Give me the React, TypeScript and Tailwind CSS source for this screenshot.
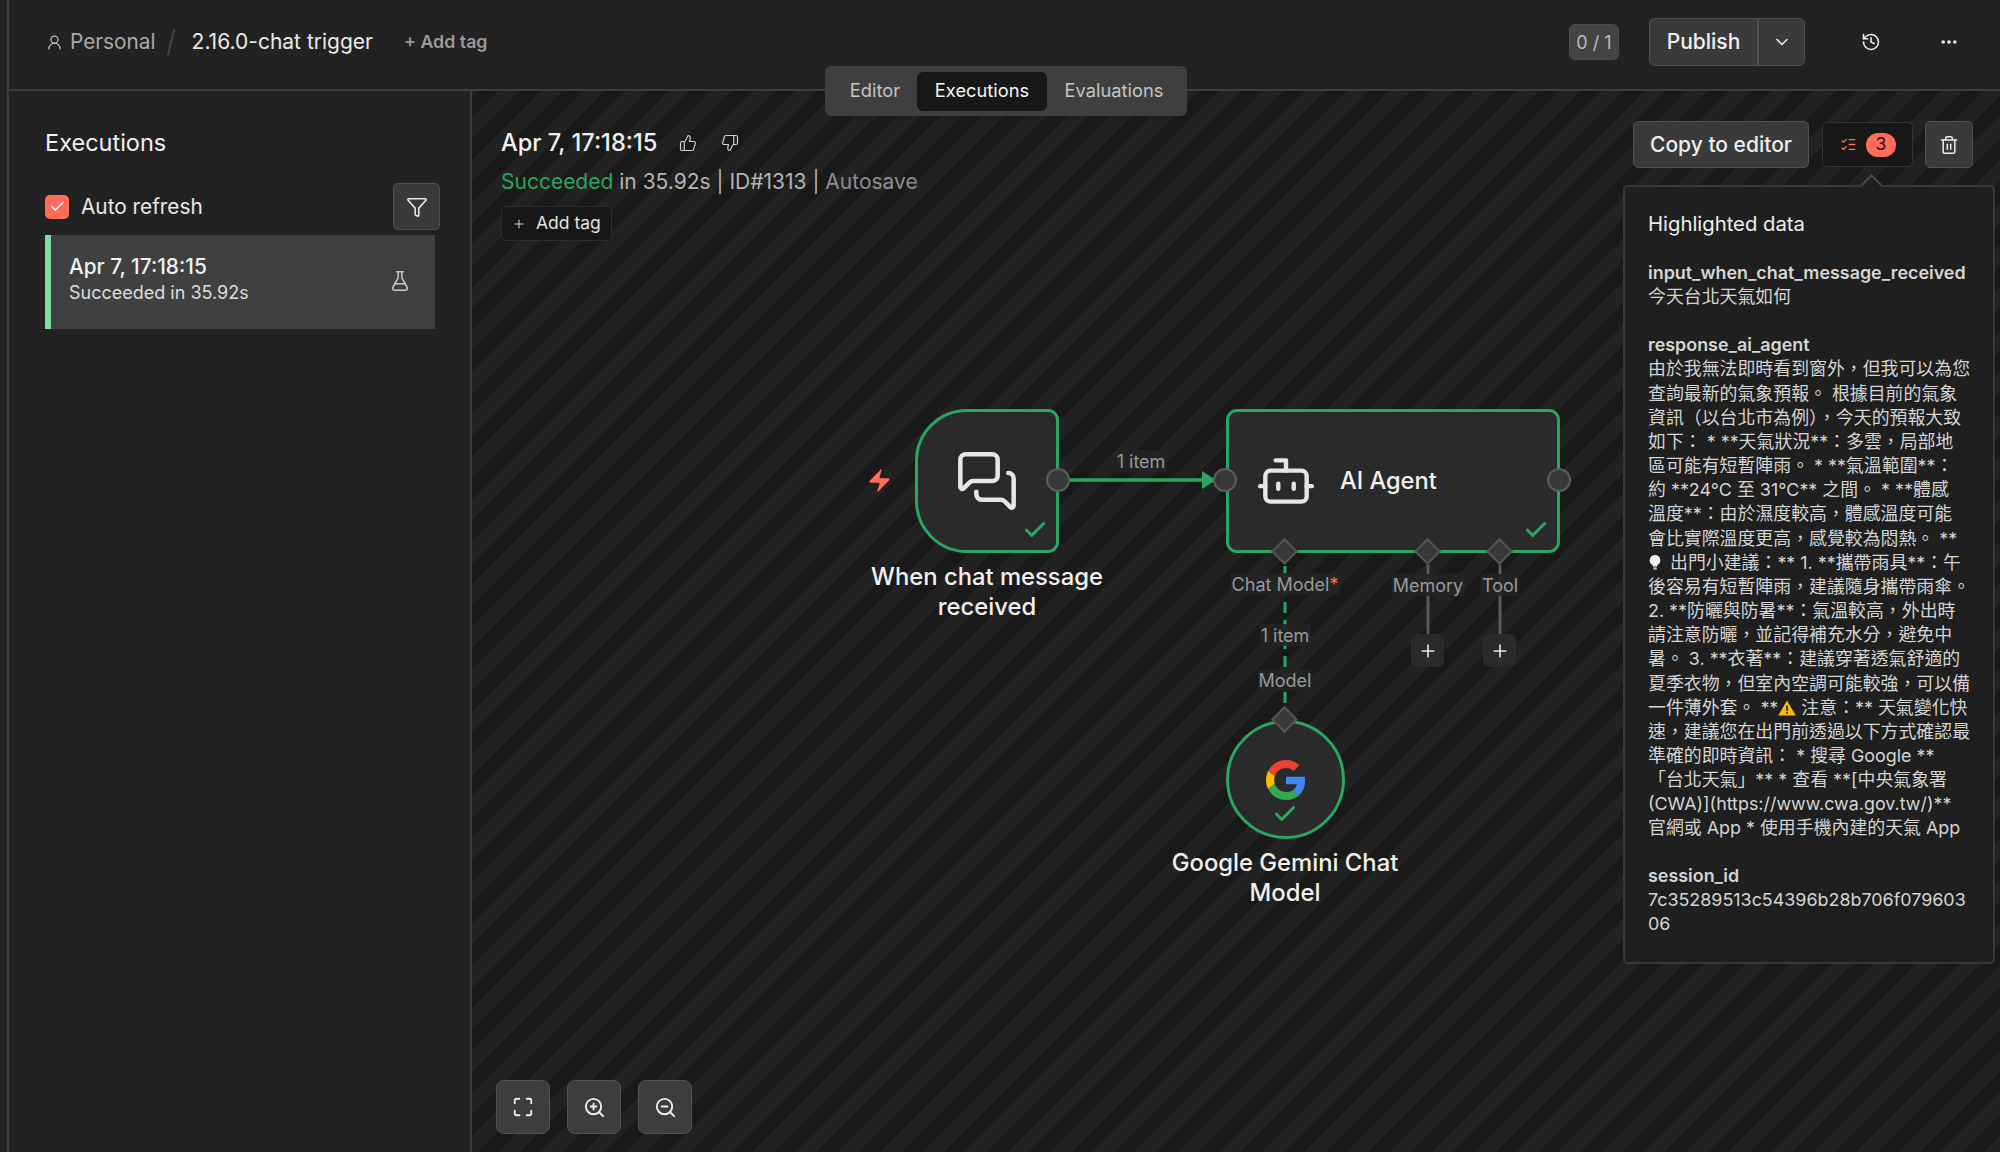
import {
  Bot,
  Check,
  ChevronDown,
  Ellipsis,
  Funnel,
  FlaskConical,
  History,
  ListChecks,
  Maximize,
  MessagesSquare,
  Plus,
  ThumbsDown,
  ThumbsUp,
  Trash2,
  UserRound,
  Zap,
  ZoomIn,
  ZoomOut,
} from 'lucide-react';

// Popover text is kept line by line, the wrapping is the one of the screenshot
const responseLines: React.ReactNode[] = [
  '由於我無法即時看到窗外，但我可以為您',
  '查詢最新的氣象預報。 根據目前的氣象',
  '資訊（以台北市為例），今天的預報大致',
  '如下： * **天氣狀況**：多雲，局部地',
  '區可能有短暫陣雨。 * **氣溫範圍**：',
  '約 **24°C 至 31°C** 之間。 * **體感',
  '溫度**：由於濕度較高，體感溫度可能',
  '會比實際溫度更高，感覺較為悶熱。 **',
  <>
    <Bulb /> 出門小建議：** 1. **攜帶雨具**：午
  </>,
  '後容易有短暫陣雨，建議隨身攜帶雨傘。',
  '2. **防曬與防暑**：氣溫較高，外出時',
  '請注意防曬，並記得補充水分，避免中',
  '暑。 3. **衣著**：建議穿著透氣舒適的',
  '夏季衣物，但室內空調可能較強，可以備',
  <>
    一件薄外套。 **
    <Warning /> 注意：** 天氣變化快
  </>,
  '速，建議您在出門前透過以下方式確認最',
  '準確的即時資訊： * 搜尋 Google **',
  '「台北天氣」** * 查看 **[中央氣象署',
  '(CWA)](https://www.cwa.gov.tw/)**',
  '官網或 App * 使用手機內建的天氣 App',
];

function Bulb() {
  return (
    <svg viewBox="0 0 14 18" className="inline-block w-[14px] h-[17px] align-[-2px] mr-[3px]">
      <path d="M7 1a5.6 5.6 0 0 0-3.2 10.2c.6.5.9 1.2 1 2h4.4c.1-.8.4-1.5 1-2A5.6 5.6 0 0 0 7 1z" fill="#f2f2f2" />
      <rect x="5" y="14" width="4" height="2.6" rx="1" fill="#b8b8b8" />
    </svg>
  );
}

function Warning() {
  return (
    <svg viewBox="0 0 18 16" className="inline-block w-[18px] h-[16px] align-[-2px]">
      <path d="M9 .5 17.8 15.5H.2z" fill="#fbbc05" />
      <rect x="8.1" y="5.5" width="1.8" height="5.5" fill="#3a2d00" />
      <rect x="8.1" y="12" width="1.8" height="1.8" fill="#3a2d00" />
    </svg>
  );
}

function GoogleLogo() {
  return (
    <svg viewBox="0 0 48 48" className="w-[40px] h-[40px]">
      <path fill="#EA4335" d="M24 9.5c3.54 0 6.71 1.22 9.21 3.6l6.85-6.85C35.9 2.38 30.47 0 24 0 14.62 0 6.51 5.38 2.56 13.22l7.98 6.19C12.43 13.72 17.74 9.5 24 9.5z" />
      <path fill="#4285F4" d="M46.98 24.55c0-1.57-.15-3.09-.38-4.55H24v9.02h12.94c-.58 2.96-2.26 5.48-4.78 7.18l7.73 6c4.51-4.18 7.09-10.36 7.09-17.65z" />
      <path fill="#FBBC05" d="M10.53 28.59c-.48-1.45-.76-2.99-.76-4.59s.27-3.14.76-4.59l-7.98-6.19C.92 16.46 0 20.12 0 24c0 3.88.92 7.54 2.56 10.78l7.97-6.19z" />
      <path fill="#34A853" d="M24 48c6.48 0 11.93-2.13 15.89-5.81l-7.73-6c-2.15 1.45-4.92 2.3-8.16 2.3-6.26 0-11.57-4.22-13.47-9.91l-7.98 6.19C6.51 42.62 14.62 48 24 48z" />
    </svg>
  );
}

function CanvasEdges() {
  return (
    <svg width="1528" height="1061" className="absolute left-0 top-0">
      {/* trigger -> agent */}
      <line x1="598" y1="389" x2="732" y2="389" stroke="#2ba55f" strokeWidth="3.5" />
      <path d="M730 380 L744 389 L730 398 Z" fill="#2ba55f" />
      {/* agent -> gemini, dashed */}
      <line x1="813" y1="475" x2="813" y2="622" stroke="#2ba55f" strokeWidth="3" strokeDasharray="11 7" />
      {/* memory and tool stubs */}
      <line x1="956" y1="474" x2="956" y2="545" stroke="#5a5a5a" strokeWidth="3" />
      <line x1="1028" y1="474" x2="1028" y2="545" stroke="#5a5a5a" strokeWidth="3" />
    </svg>
  );
}

function Handle({ className }: { className: string }) {
  return <div className={`absolute w-[24px] h-[24px] rounded-full bg-[#393939] border-2 border-[#5c5c5c] ${className}`} />;
}

function Diamond({ className }: { className: string }) {
  return <div className={`absolute w-[19px] h-[19px] rotate-45 bg-[#393939] border-2 border-[#555555] ${className}`} />;
}

function EdgeLabel({ className, children }: { className: string; children: React.ReactNode }) {
  return (
    <div className={`absolute -translate-x-1/2 h-[22px] px-[1px] flex items-center whitespace-nowrap bg-[#232323]/90 text-[#999999] text-[18px] ${className}`}>
      {children}
    </div>
  );
}

function AddButton({ className }: { className: string }) {
  return (
    <div className={`absolute w-[33px] h-[33px] rounded-[6px] bg-[#2a2a2a] flex items-center justify-center ${className}`}>
      <Plus size={20} strokeWidth={2} className="text-[#e4e4e4]" />
    </div>
  );
}

function Success({ className }: { className: string }) {
  return <Check size={26} strokeWidth={2.8} className={`absolute text-[#2ba55f] ${className}`} />;
}

function ToolButton({ children }: { children: React.ReactNode }) {
  return (
    <div className="w-[54px] h-[54px] rounded-[8px] bg-[#3d3d3d] border border-[#535353] flex items-center justify-center text-[#eeeeee]">
      {children}
    </div>
  );
}

function Sidebar() {
  return (
    <aside className="w-[463px] h-full shrink-0 border-r-2 border-[#3c3c3c] pt-[36px] pl-[36px] bg-[#222222]">
      <h2 className="text-[23.5px] leading-[32px] text-[#f0f0f0]">Executions</h2>
      <div className="mt-[24px] w-[395px] h-[47px] flex items-center">
        <div className="w-[24px] h-[24px] rounded-[5px] bg-[#ff6d5a] flex items-center justify-center">
          <Check size={17} strokeWidth={2} className="text-white" />
        </div>
        <span className="ml-[12px] mt-[1px] text-[20.8px] text-[#e8e8e8]">Auto refresh</span>
        <div className="ml-auto w-[47px] h-[47px] rounded-[5px] bg-[#3a3a3a] border border-[#515151] flex items-center justify-center text-[#e8e8e8]">
          <Funnel size={22} strokeWidth={1.7} />
        </div>
      </div>
      <div className="mt-[5px] w-[390px] h-[94px] bg-[#404040] border-l-[6px] border-[#7fdfa3] flex items-center pl-[18px] pr-[24px] pb-[6px]">
        <div className="flex-1">
          <div className="text-[20.8px] leading-[26px] font-medium text-[#f2f2f2]">Apr 7, 17:18:15</div>
          <div className="text-[18px] leading-[25px] text-[#dddddd]">Succeeded in 35.92s</div>
        </div>
        <FlaskConical size={22} strokeWidth={1.7} className="text-[#c8c8c8] mt-[4px]" />
      </div>
    </aside>
  );
}

function Popover() {
  return (
    <div className="absolute left-[1151px] top-[94px] w-[372px] h-[779px] rounded-[5px] bg-[#1f1f1f] border-2 border-[#383838] pl-[23px] pt-[24px] text-[#d4d4d4] text-[17.9px] leading-[24.15px]">
      <div className="absolute -top-[10px] left-[239px] w-[15px] h-[15px] rotate-45 bg-[#1f1f1f] border-l-2 border-t-2 border-[#4a4a4a]" />
      <h3 className="text-[20.3px] leading-[26px] text-[#eeeeee] mb-[24px]">Highlighted data</h3>
      <div className="font-semibold">input_when_chat_message_received</div>
      <div>今天台北天氣如何</div>
      <div className="mt-[24px] font-semibold">response_ai_agent</div>
      {responseLines.map((line, i) => (
        <div key={i} className="whitespace-nowrap">{line}</div>
      ))}
      <div className="mt-[23px] font-semibold">session_id</div>
      <div>7c35289513c54396b28b706f079603</div>
      <div>06</div>
    </div>
  );
}

function WorkflowCanvas() {
  return (
    <main className="relative flex-1 h-full overflow-hidden bg-[repeating-linear-gradient(135deg,#222222_0px,#222222_3.8px,#191919_3.8px,#191919_18.8px,#222222_18.8px,#222222_30px)]">
      <CanvasEdges />

      {/* execution heading */}
      <div className="absolute left-[29px] top-[37px] flex flex-col">
        <div className="flex items-center h-[30px]">
          <span className="text-[23.6px] font-medium text-[#f2f2f2]">Apr 7, 17:18:15</span>
          <ThumbsUp size={18} strokeWidth={1.6} className="ml-[22px] text-[#cfcfcf]" />
          <ThumbsDown size={18} strokeWidth={1.6} className="ml-[24px] text-[#cfcfcf]" />
        </div>
        <div className="mt-[9px] text-[21px] leading-[30px] text-[#b4b4b4] whitespace-nowrap">
          <span className="text-[#2ba55f]">Succeeded</span> in 35.92s | ID#1313 | <span className="text-[#8f8f8f]">Autosave</span>
        </div>
        <div className="mt-[9px] w-[111px] h-[35px] rounded-[5px] bg-[#171717] border border-[#2d2d2d] flex items-center pl-[10px] gap-[10px] text-[17.5px] text-[#e2e2e2]">
          <Plus size={14} strokeWidth={1.6} />
          <span>Add tag</span>
        </div>
      </div>

      {/* trigger node */}
      <div className="absolute left-[443px] top-[318px] w-[144px] h-[144px] rounded-l-[52px] rounded-r-[11px] bg-[#2a2a2a] border-[3px] border-[#2ba55f] flex items-center justify-center">
        <MessagesSquare size={64} strokeWidth={1.7} className="text-[#e6e6e6]" />
        <Success className="left-[104px] top-[105px]" />
      </div>
      <Handle className="left-[574px] top-[377px]" />
      <Zap size={27} fill="#ff6d5a" strokeWidth={0} className="absolute left-[394px] top-[376px]" />
      <div className="absolute left-[392px] top-[471px] w-[246px] text-center text-[23.8px] leading-[30px] font-medium text-[#f0f0f0]">
        When chat message received
      </div>
      <EdgeLabel className="left-[669px] top-[359px]">1 item</EdgeLabel>

      {/* agent node */}
      <div className="absolute left-[754px] top-[318px] w-[334px] h-[144px] rounded-[11px] bg-[#2a2a2a] border-[3px] border-[#2ba55f] flex items-center pl-[26px]">
        <Bot size={62} strokeWidth={1.7} className="text-[#e6e6e6]" />
        <span className="ml-[23px] text-[23.6px] font-medium text-[#f2f2f2]">AI Agent</span>
        <Success className="left-[294px] top-[105px]" />
      </div>
      <Handle className="left-[741px] top-[377px]" />
      <Handle className="left-[1075px] top-[377px]" />
      <Diamond className="left-[803px] top-[451px]" />
      <Diamond className="left-[946px] top-[451px]" />
      <Diamond className="left-[1018px] top-[451px]" />
      <EdgeLabel className="left-[813px] top-[482px]">
        Chat Model<span className="text-[#ff6d5a]">*</span>
      </EdgeLabel>
      <EdgeLabel className="left-[956px] top-[483px]">Memory</EdgeLabel>
      <EdgeLabel className="left-[1028px] top-[483px]">Tool</EdgeLabel>
      <EdgeLabel className="left-[813px] top-[533px]">1 item</EdgeLabel>
      <EdgeLabel className="left-[813px] top-[578px]">Model</EdgeLabel>
      <AddButton className="left-[939px] top-[543px]" />
      <AddButton className="left-[1011px] top-[543px]" />

      {/* model node */}
      <div className="absolute left-[754px] top-[629px] w-[119px] h-[119px] rounded-full bg-[#2a2a2a] border-[3px] border-[#2ba55f] flex items-center justify-center">
        <GoogleLogo />
        <Success className="left-[43px] top-[78px]" />
      </div>
      <Diamond className="left-[803px] top-[619px]" />
      <div className="absolute left-[683px] top-[757px] w-[260px] text-center text-[23.8px] leading-[30px] font-medium text-[#f0f0f0]">
        Google Gemini Chat Model
      </div>

      {/* execution actions */}
      <div className="absolute left-[1161px] top-[30px] flex items-center">
        <div className="w-[176px] h-[47px] rounded-[5px] bg-[#3a3a3a] border border-[#515151] flex items-center justify-center text-[21px] font-medium text-[#eeeeee]">
          Copy to editor
        </div>
        <div className="ml-[13px] w-[91px] h-[45px] rounded-[5px] bg-[#171717] border border-[#333333] flex items-center pl-[17px] gap-[9px]">
          <ListChecks size={17} strokeWidth={1.8} className="text-[#ff6d5a]" />
          <span className="w-[30px] h-[24px] rounded-full bg-[#ff6d5a] flex items-center justify-center text-[17.5px] text-[#2a1511]">3</span>
        </div>
        <div className="ml-[12px] w-[48px] h-[47px] rounded-[5px] bg-[#3a3a3a] border border-[#515151] flex items-center justify-center text-[#eeeeee]">
          <Trash2 size={20} strokeWidth={1.8} />
        </div>
      </div>

      <Popover />

      {/* canvas controls */}
      <div className="absolute left-[24px] top-[989px] flex gap-[17px]">
        <ToolButton><Maximize size={22} strokeWidth={2} /></ToolButton>
        <ToolButton><ZoomIn size={23} strokeWidth={2} /></ToolButton>
        <ToolButton><ZoomOut size={23} strokeWidth={2} /></ToolButton>
      </div>
    </main>
  );
}

function Header() {
  return (
    <header className="h-[91px] shrink-0 border-b-2 border-[#3c3c3c] bg-[#222222] flex items-center pl-[37px] pr-[41px] pb-[5px]">
      <UserRound size={17} strokeWidth={1.7} className="text-[#c4c4c4]" />
      <span className="ml-[7px] text-[20.8px] text-[#a8a8a8]">Personal</span>
      <span className="ml-[14px] w-[2px] h-[27px] bg-[#454545] rotate-[14deg]" />
      <span className="ml-[20px] text-[21px] text-[#eaeaea]">2.16.0-chat trigger</span>
      <span className="ml-[31px] text-[17.8px] font-semibold text-[#9a9a9a]">+ Add tag</span>

      <div className="ml-auto w-[50px] h-[36px] rounded-[6px] bg-[#444444] border border-[#4e4e4e] flex items-center justify-center text-[18px] text-[#bdbdbd]">
        0 / 1
      </div>
      <div className="ml-[30px] w-[156px] h-[48px] rounded-[6px] bg-[#3a3a3a] border border-[#515151] flex items-center">
        <span className="w-[109px] h-full border-r-2 border-[#515151] flex items-center justify-center text-[21px] font-medium text-[#f0f0f0]">Publish</span>
        <ChevronDown size={20} strokeWidth={2} className="ml-[13px] text-[#e4e4e4]" />
      </div>
      <History size={20} strokeWidth={1.9} className="ml-[56px] text-[#eeeeee]" />
      <Ellipsis size={20} strokeWidth={2.4} className="ml-[58px] text-[#eeeeee]" />
    </header>
  );
}

export default function App() {
  return (
    <div className="relative w-[2000px] h-[1152px] overflow-hidden flex bg-[#222222] [font-family:Inter,'Noto_Sans_CJK_TC',sans-serif]">
      <div className="w-[9px] h-full shrink-0 border-r-2 border-[#3c3c3c]" />
      <div className="flex-1 min-w-0 flex flex-col">
        <Header />
        <div className="flex-1 min-h-0 flex">
          <Sidebar />
          <WorkflowCanvas />
        </div>
      </div>

      {/* view switcher sits over header and canvas */}
      <div className="absolute left-[825px] top-[66px] w-[362px] h-[50px] rounded-[6px] bg-[#3f3f3f] flex items-center pl-[8px] text-[18.3px] text-[#c4c4c4]">
        <span className="w-[84px] text-center">Editor</span>
        <span className="w-[130px] h-[39px] rounded-[6px] bg-[#171717] flex items-center justify-center text-[#f5f5f5]">Executions</span>
        <span className="w-[134px] text-center">Evaluations</span>
      </div>
    </div>
  );
}
